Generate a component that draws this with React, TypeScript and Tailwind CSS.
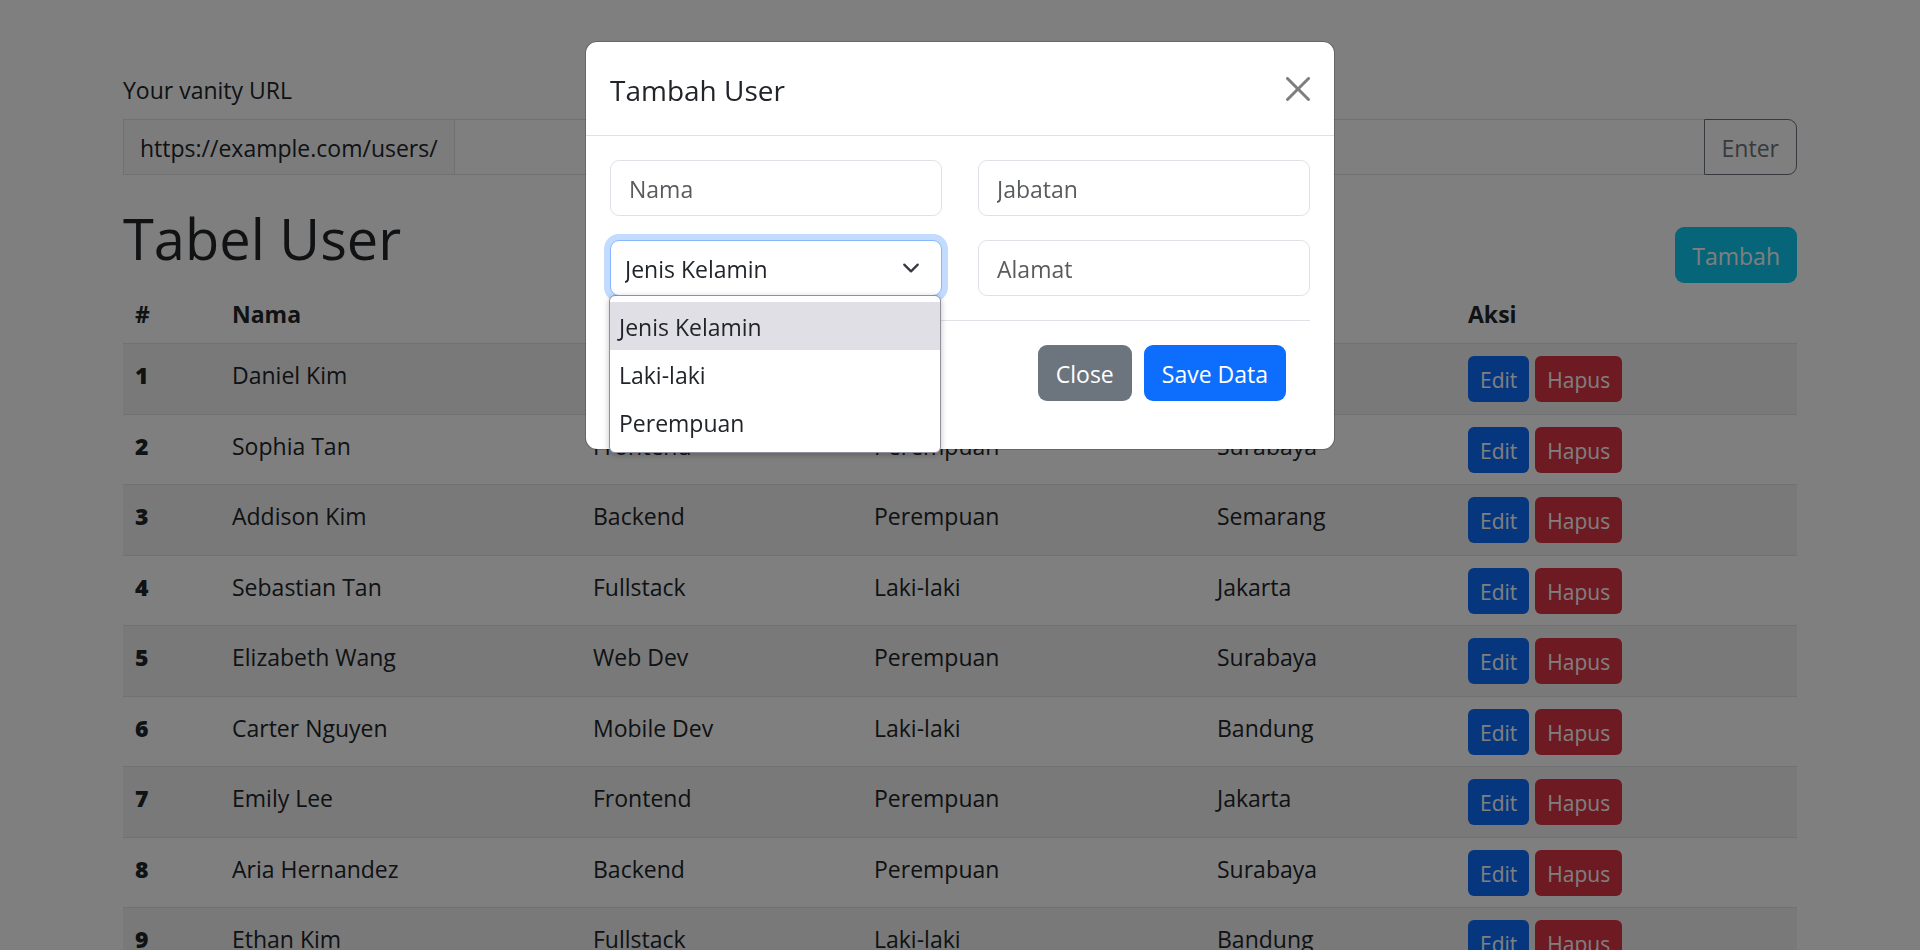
import React from "react";

type User = {
  name: string;
  role: string;
  gender: string;
  city: string;
};

const users: User[] = [
  { name: "Daniel Kim", role: "Web Dev", gender: "Laki-laki", city: "Bandung" },
  { name: "Sophia Tan", role: "Frontend", gender: "Perempuan", city: "Surabaya" },
  { name: "Addison Kim", role: "Backend", gender: "Perempuan", city: "Semarang" },
  { name: "Sebastian Tan", role: "Fullstack", gender: "Laki-laki", city: "Jakarta" },
  { name: "Elizabeth Wang", role: "Web Dev", gender: "Perempuan", city: "Surabaya" },
  { name: "Carter Nguyen", role: "Mobile Dev", gender: "Laki-laki", city: "Bandung" },
  { name: "Emily Lee", role: "Frontend", gender: "Perempuan", city: "Jakarta" },
  { name: "Aria Hernandez", role: "Backend", gender: "Perempuan", city: "Surabaya" },
  { name: "Ethan Kim", role: "Fullstack", gender: "Laki-laki", city: "Bandung" },
];

const genderOptions = ["Jenis Kelamin", "Laki-laki", "Perempuan"];

function UrlForm() {
  return (
    <div className="mb-6">
      <label htmlFor="vanity-url" className="mb-[11px] block">
        Your vanity URL
      </label>
      <div className="flex h-14">
        <span className="flex items-center border border-[#dee2e6] bg-[#f8f9fa] px-4 pt-0.5">
          https://example.com/users/
        </span>
        <input
          id="vanity-url"
          type="text"
          className="min-w-0 flex-1 border-y border-[#dee2e6] bg-white px-[18px] pt-0.5 outline-none"
        />
        <button
          type="button"
          className="rounded-r-[9px] border border-[#6c757d] px-[17px] pt-0.5 text-[#6c757d]"
        >
          Enter
        </button>
      </div>
    </div>
  );
}

function UserTable() {
  return (
    <table className="w-full table-fixed border-collapse text-left">
      <colgroup>
        <col className="w-[97px]" />
        <col className="w-[361px]" />
        <col className="w-[281px]" />
        <col className="w-[343px]" />
        <col className="w-[251px]" />
        <col />
      </colgroup>
      <thead>
        <tr className="h-[60px] border-b border-[#dee2e6] align-top font-bold">
          <th className="px-3 pt-[13px]">#</th>
          <th className="px-3 pt-[13px]">Nama</th>
          <th className="px-3 pt-[13px]">Jabatan</th>
          <th className="px-3 pt-[13px]">Jenis Kelamin</th>
          <th className="px-3 pt-[13px]">Alamat</th>
          <th className="px-3 pt-[13px]">Aksi</th>
        </tr>
      </thead>
      <tbody>
        {users.map((user, index) => (
          <tr
            key={user.name}
            className="border-b border-[#dee2e6] align-top odd:h-[71px] odd:bg-[#f2f2f2] even:h-[70px]"
          >
            <th scope="row" className="px-3 pt-[13px] font-extrabold">
              {index + 1}
            </th>
            <td className="px-3 pt-[13px]">{user.name}</td>
            <td className="px-3 pt-[13px]">{user.role}</td>
            <td className="px-3 pt-[13px]">{user.gender}</td>
            <td className="px-3 pt-[13px]">{user.city}</td>
            <td className="px-3 pt-3">
              <div className="flex gap-[6px] text-[21px] text-white">
                <button type="button" className="h-[46px] rounded-md bg-[#0d6efd] px-3 pt-0.5">
                  Edit
                </button>
                <button type="button" className="h-[46px] rounded-md bg-[#dc3545] px-3 pt-0.5">
                  Hapus
                </button>
              </div>
            </td>
          </tr>
        ))}
      </tbody>
    </table>
  );
}

function TextField({ label }: { label: string }) {
  return (
    <input
      type="text"
      aria-label={label}
      placeholder={label}
      className="h-14 w-full rounded-[9px] border border-[#dee2e6] bg-white px-[18px] pt-0.5 outline-none placeholder:text-[#595c5f]"
    />
  );
}

function GenderSelect() {
  return (
    <div className="relative">
      <select
        aria-label="Jenis Kelamin"
        className="block h-14 w-full appearance-none rounded-[9px] border border-[#86b7fe] bg-white pl-[14px] pr-12 pt-0.5 shadow-[0_0_0_6px_#c2dbfe] outline-none"
      >
        {genderOptions.map((option) => (
          <option key={option}>{option}</option>
        ))}
      </select>
      <svg
        viewBox="0 0 16 16"
        className="pointer-events-none absolute right-[22px] top-[19px] size-[18px]"
        fill="none"
        stroke="#343a40"
        strokeWidth="2"
        strokeLinecap="round"
        strokeLinejoin="round"
        aria-hidden="true"
      >
        <path d="m2 5 6 6 6-6" />
      </svg>
      <ul
        role="listbox"
        aria-label="Jenis Kelamin"
        className="absolute -left-px right-px top-[55px] z-10 rounded-md border border-[#8f8f9d] bg-white py-[6px] shadow-[0_2px_6px_rgba(0,0,0,0.25)]"
      >
        {genderOptions.map((option, index) => (
          <li
            key={option}
            role="option"
            aria-selected={index === 0}
            className="flex h-12 items-center px-[9px] pt-0.5 aria-selected:bg-[#e0dfe5]"
          >
            {option}
          </li>
        ))}
      </ul>
    </div>
  );
}

function AddUserModal() {
  return (
    <div className="fixed inset-0 flex items-start justify-center bg-black/50 pt-[41px]">
      <div
        role="dialog"
        aria-modal="true"
        aria-labelledby="modal-title"
        className="w-full max-w-[750px] rounded-xl border border-black/20 bg-white bg-clip-padding"
      >
        <div className="flex items-center justify-between border-b border-[#dee2e6] p-6">
          <h2 id="modal-title" className="pt-1 text-[28px] leading-[41px]">
            Tambah User
          </h2>
          <button type="button" aria-label="Close" className="opacity-50">
            <svg viewBox="0 0 16 16" className="size-6" fill="#000" aria-hidden="true">
              <path d="M.293.293a1 1 0 0 1 1.414 0L8 6.586 14.293.293a1 1 0 1 1 1.414 1.414L9.414 8l6.293 6.293a1 1 0 0 1-1.414 1.414L8 9.414l-6.293 6.293a1 1 0 0 1-1.414-1.414L6.586 8 .293 1.707a1 1 0 0 1 0-1.414z" />
            </svg>
          </button>
        </div>
        <form className="p-6">
          <div className="mb-6 grid grid-cols-2 gap-x-9 gap-y-6">
            <TextField label="Nama" />
            <TextField label="Jabatan" />
            <GenderSelect />
            <TextField label="Alamat" />
          </div>
          <div className="flex justify-end gap-3 border-t border-[#dee2e6] p-6 text-white">
            <button type="button" className="h-14 rounded-[9px] bg-[#6c757d] px-[18px] pt-0.5">
              Close
            </button>
            <button type="button" className="h-14 rounded-[9px] bg-[#0d6efd] px-[18px] pt-0.5">
              Save Data
            </button>
          </div>
        </form>
      </div>
    </div>
  );
}

export default function App() {
  return (
    <div className="h-screen overflow-hidden bg-white font-['Open_Sans','Noto_Sans',sans-serif] text-[23px] leading-9 text-[#212529]">
      <main className="mx-auto max-w-[1710px] px-[18px] pt-[72px]">
        <UrlForm />
        <div className="flex items-end justify-between">
          <h1 className="mb-3 pt-[6px] text-[56px] leading-[66px]">Tabel User</h1>
          <button
            type="button"
            className="h-14 rounded-[9px] bg-[#0dcaf0] px-[17px] pt-0.5 text-white"
          >
            Tambah
          </button>
        </div>
        <UserTable />
      </main>
      <AddUserModal />
    </div>
  );
}
